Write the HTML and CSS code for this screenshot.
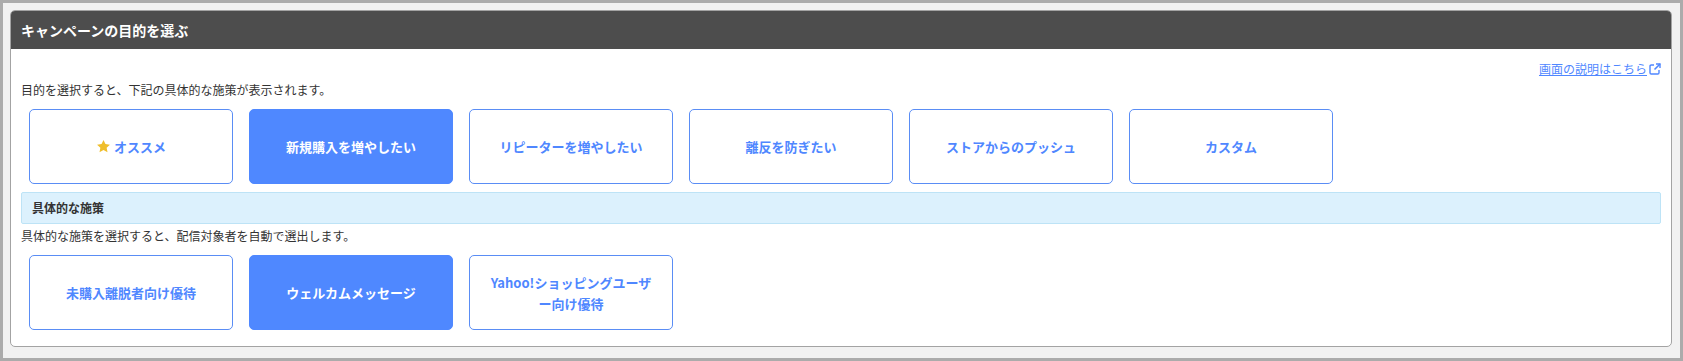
FILE: index.html
```html
<!DOCTYPE html>
<html lang="ja">
<head>
<meta charset="utf-8">
<title>キャンペーンの目的を選ぶ</title>
<link rel="stylesheet" href="styles.css">
</head>
<body>
<div class="frame">
  <section class="panel">
    <header class="panel-header">キャンペーンの目的を選ぶ</header>
    <div class="panel-body">
      <div class="help-row">
        <a class="help-link" href="#">画面の説明はこちら</a>
        <svg class="ext-icon" viewBox="0 0 12 12" width="12" height="12" aria-hidden="true">
          <path d="M5 2H2.2C1.5 2 1 2.5 1 3.2v6.6c0 .7.5 1.2 1.2 1.2h6.6c.7 0 1.2-.5 1.2-1.2V7" fill="none" stroke="#4f87ff" stroke-width="1.4"/>
          <path d="M7 1h4v4" fill="none" stroke="#4f87ff" stroke-width="1.4"/>
          <path d="M11 1L5.5 6.5" fill="none" stroke="#4f87ff" stroke-width="1.6"/>
        </svg>
      </div>
      <p class="desc">目的を選択すると、下記の具体的な施策が表示されます。</p>
      <div class="choices">
        <button class="choice">
          <svg class="star" viewBox="0 0 24 24" width="15" height="15" aria-hidden="true"><path d="M12 1.5l3.1 6.6 7.2.9-5.3 5 1.4 7.1L12 17.6l-6.4 3.5L7 14l-5.3-5 7.2-.9z" fill="#efbe2c"/></svg>オススメ
        </button>
        <button class="choice selected">新規購入を増やしたい</button>
        <button class="choice">リピーターを増やしたい</button>
        <button class="choice">離反を防ぎたい</button>
        <button class="choice">ストアからのプッシュ</button>
        <button class="choice">カスタム</button>
      </div>
      <div class="subhead">具体的な施策</div>
      <p class="desc desc2">具体的な施策を選択すると、配信対象者を自動で選出します。</p>
      <div class="choices choices2">
        <button class="choice">未購入離脱者向け優待</button>
        <button class="choice selected">ウェルカムメッセージ</button>
        <button class="choice">Yahoo!ショッピングユーザー向け優待</button>
      </div>
    </div>
  </section>
</div>
</body>
</html>
```

FILE: styles.css
```css
* { box-sizing: border-box; }
html, body { margin: 0; padding: 0; }
body {
  font-family: "Noto Sans CJK JP", "Noto Sans", sans-serif;
  color: #333;
  background: #f1f1f1;
}
.frame {
  height: 361px;
  border: 3px solid #ababab;
  padding: 7px 8px 11px 7px;
  display: flex;
  flex-direction: column;
  background: #f1f1f1;
}
.panel {
  flex: 1;
  background: #fff;
  border: 1px solid #a3a3a3;
  border-radius: 5px;
  overflow: hidden;
  display: flex;
  flex-direction: column;
}
.panel-header {
  height: 38px;
  background: #4d4d4d;
  color: #fff;
  font-size: 14px;
  font-weight: bold;
  line-height: 38px;
  padding-left: 10px;
}
.panel-body {
  padding: 11px 10px 0 10px;
}
.help-row {
  height: 18px;
  display: flex;
  justify-content: flex-end;
  align-items: center;
  gap: 2px;
}
.help-link {
  font-size: 12px;
  line-height: 18px;
  color: #4f87ff;
  text-decoration: underline;
}
.ext-icon { display: block; }
.desc {
  margin: 3px 0 0;
  font-size: 12px;
  line-height: 18px;
  color: #333;
}
.choices {
  margin-top: 10px;
  padding-left: 8px;
  display: flex;
  gap: 16px;
}
.choice {
  width: 204px;
  height: 75px;
  border: 1px solid #5a8df5;
  border-radius: 5px;
  background: #fff;
  color: #4f87ff;
  font-family: inherit;
  font-size: 13px;
  font-weight: bold;
  line-height: 21px;
  padding: 0 20px;
  display: flex;
  align-items: center;
  justify-content: center;
  text-align: center;
  gap: 3px;
}
.choice.selected {
  background: #4f88ff;
  border-color: #4f88ff;
  color: #fff;
}
.star { flex: none; }
.subhead {
  margin-top: 8px;
  height: 32px;
  background: #dcf1fd;
  border: 1px solid #bde3f6;
  border-radius: 2px;
  padding-left: 10px;
  font-size: 12px;
  font-weight: bold;
  line-height: 30px;
  color: #333;
}
.desc2 { margin-top: 3px; }
.choices2 { margin-top: 10px; }
```
